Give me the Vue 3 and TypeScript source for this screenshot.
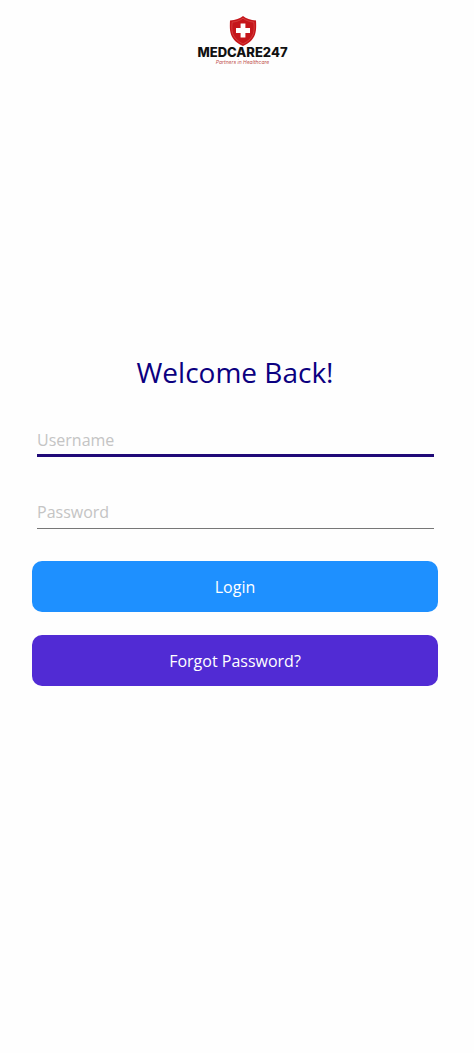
<script setup lang="ts">
import { ref } from 'vue'

const username = ref('')
const password = ref('')
</script>

<template>
  <main class="page">
    <header class="brand">
      <svg class="shield" viewBox="0 0 28 30" aria-hidden="true">
        <path
          d="M14 0C11 2.6 6.500 4.200 1 4.500C0.800 9 0.500 14 2 18.500C4 24 8.500 27.500 14 30C19.500 27.500 24 24 26 18.500C27.500 14 27.200 9 27 4.500C21.500 4.200 17 2.600 14 0Z"
          fill="#c5161b"
        />
        <path
          d="M14 2.200C11 4.500 7.500 5.700 3.200 6.100C2.700 10 2.500 14 3.700 17.800C5.500 22.500 9.500 25.800 14 28C18.500 25.800 22.500 22.500 24.300 17.800C25.500 14 25.300 10 24.800 6.100C20.500 5.700 17 4.500 14 2.200Z"
          fill="none"
          stroke="#dd5552"
          stroke-width="0.600"
        />
        <path d="M11.600 7.500H16.400V12.100H21V16.900H16.400V21.500H11.600V16.900H7V12.100H11.600Z" fill="#fff" />
      </svg>
      <span class="name">MEDCARE247</span>
      <span class="tagline">Partners in Healthcare</span>
    </header>

    <form class="form" @submit.prevent>
      <h1>Welcome Back!</h1>
      <input v-model="username" class="field active" type="text" placeholder="Username" aria-label="Username" />
      <input v-model="password" class="field" type="password" placeholder="Password" aria-label="Password" />
      <button class="login" type="submit">Login</button>
      <button class="forgot" type="button">Forgot Password?</button>
    </form>
  </main>
</template>

<style>
body {
  margin: 0;
  background: #fefefe;
}
</style>

<style scoped>
.page {
  display: flex;
  flex-direction: column;
  box-sizing: border-box;
  min-height: 100vh;
  padding: 16px 36px 0 32px;
  font-family: "Open Sans", "Noto Sans", sans-serif;
}
.brand {
  display: flex;
  flex-direction: column;
  align-items: center;
  padding-left: 15px;
}
.shield {
  width: 28px;
  height: 30px;
}
.name {
  font-family: Inter, "Open Sans", sans-serif;
  font-size: 13px;
  line-height: 13px;
  font-weight: 800;
  color: #111;
}
.tagline {
  font-family: Inter, "Open Sans", sans-serif;
  font-size: 5px;
  line-height: 6px;
  font-style: italic;
  color: #c0504d;
}
.form {
  display: flex;
  flex-direction: column;
  margin-top: 285px;
}
h1 {
  margin: 0 0 32px;
  font-size: 28px;
  line-height: 44px;
  font-weight: 400;
  text-align: center;
  color: #0b0080;
}
.field {
  box-sizing: border-box;
  height: 32px;
  margin: 0 4px 0 5px;
  padding: 0 0 2px;
  border: 0;
  border-bottom: 1px solid #777;
  border-radius: 0;
  outline: 0;
  background: transparent;
  font: 400 16px/24px "Open Sans", "Noto Sans", sans-serif;
  color: #222;
}
.field.active {
  height: 31px;
  padding-bottom: 0;
  border-bottom: 3px solid #200a78;
  margin-bottom: 40px;
}
.field::placeholder {
  color: #c4c4c4;
  opacity: 1;
}
button {
  height: 51px;
  padding: 0;
  border: 0;
  border-radius: 10px;
  font: 400 16px/24px "Open Sans", "Noto Sans", sans-serif;
  color: #fff;
}
.login {
  margin-top: 32px;
  background: #1e90ff;
}
.forgot {
  margin-top: 23px;
  background: #512bd4;
}
</style>
